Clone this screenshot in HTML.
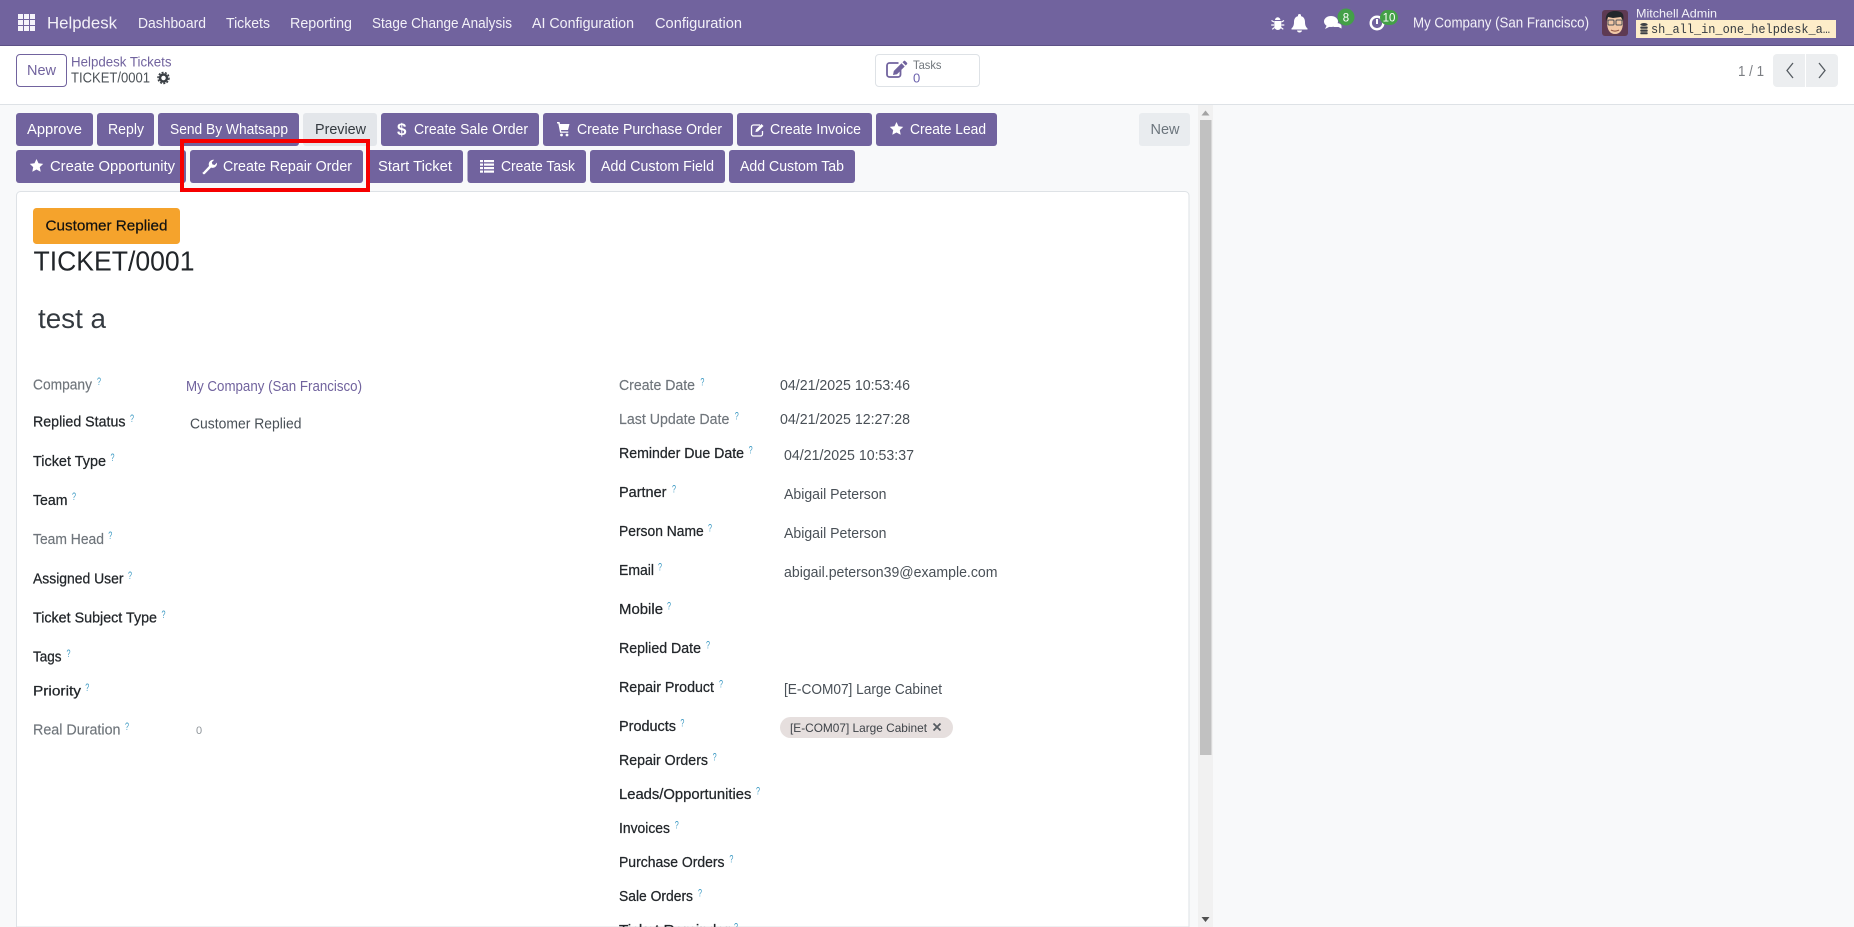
<!DOCTYPE html>
<html lang="en"><head><meta charset="utf-8"><title>Helpdesk</title>
<style>
html,body{margin:0;padding:0;width:1854px;height:927px;overflow:hidden;background:#f8f9fa}
svg{display:block;position:absolute;left:0;top:0}
text{font-family:"Liberation Sans",sans-serif;font-size:14.5px;white-space:pre}
.n{fill:#f3f1f8}
.b{fill:#fff;font-size:14.5px}
.l{fill:#22262a;stroke:#22262a;stroke-width:.25px}
.g{fill:#6f757b;stroke:#6f757b;stroke-width:.15px}
.v{fill:#495057}
.q{fill:#3f9bc4;font-size:11px}
.m{fill:#71639e}
</style></head><body>
<svg width="1854" height="927" viewBox="0 0 1854 927" xmlns="http://www.w3.org/2000/svg">
<rect width="1854" height="927" fill="#f8f9fa"/>
<!-- navbar -->
<rect width="1854" height="46" fill="#71639e"/>
<rect y="45" width="1854" height="1" fill="#5d5186"/>
<g fill="#f5f3fa">
<rect x="18" y="14" width="5" height="5"/><rect x="24" y="14" width="5" height="5"/><rect x="30" y="14" width="5" height="5"/>
<rect x="18" y="20" width="5" height="5"/><rect x="24" y="20" width="5" height="5"/><rect x="30" y="20" width="5" height="5"/>
<rect x="18" y="26" width="5" height="5"/><rect x="24" y="26" width="5" height="5"/><rect x="30" y="26" width="5" height="5"/>
</g>
<text class="n" x="47" y="28.500" style="font-size:16.500px" textLength="70" lengthAdjust="spacingAndGlyphs">Helpdesk</text>
<text class="n" x="138" y="28" textLength="68" lengthAdjust="spacingAndGlyphs">Dashboard</text>
<text class="n" x="226" y="28" textLength="44" lengthAdjust="spacingAndGlyphs">Tickets</text>
<text class="n" x="290" y="28" textLength="62" lengthAdjust="spacingAndGlyphs">Reporting</text>
<text class="n" x="372" y="28" textLength="140" lengthAdjust="spacingAndGlyphs">Stage Change Analysis</text>
<text class="n" x="532" y="28" textLength="102" lengthAdjust="spacingAndGlyphs">AI Configuration</text>
<text class="n" x="655" y="28" textLength="87" lengthAdjust="spacingAndGlyphs">Configuration</text>
<!-- systray -->
<g fill="#fff">
<path d="M1275 20a2.700 2.700 0 0 1 5.400 0zM1274.300 21h7v5.500a3.500 3.500 0 0 1-7 0z"/>
<path d="M1274 22l-2.500-1.500M1281.500 22l2.500-1.500M1274 25h-2.800M1281.500 25h2.800M1274.500 27.500l-2.300 1.800M1281 27.500l2.300 1.800" stroke="#fff" stroke-width="1.200" fill="none"/>
<path d="M1299.500 14a1.500 1.500 0 0 1 1.500 1.500v.6c2.800.7 4 3 4 5.900 0 3.500 1 5 2.500 6.500v1h-16v-1c1.500-1.500 2.500-3 2.500-6.500 0-2.900 1.200-5.200 4-5.900v-.6a1.500 1.500 0 0 1 1.500-1.500zM1297 30.500h5a2.500 2 0 0 1-5 0z"/>
<ellipse cx="1331" cy="21.500" rx="7" ry="5.500"/><path d="M1327 25l-2 4 5-2.500z"/>
<path d="M1336 23c3.500 0 5.500 1.500 5.500 3v2.500l-3-1.500h-5z"/>
</g>
<circle cx="1346" cy="17" r="8.500" fill="#43a047"/>
<text x="1346" y="21.500" text-anchor="middle" fill="#fff" style="font-size:11.500px">8</text>
<circle cx="1377" cy="23" r="6.300" fill="none" stroke="#fff" stroke-width="2.400"/>
<rect x="1376" y="19" width="2" height="5" fill="#fff"/>
<rect x="1380" y="10" width="18" height="15" rx="7.500" fill="#43a047"/>
<text x="1389" y="21.500" text-anchor="middle" fill="#fff" style="font-size:11.500px">10</text>
<text class="n" x="1413" y="27.500" textLength="176" lengthAdjust="spacingAndGlyphs">My Company (San Francisco)</text>
<!-- avatar -->
<rect x="1602" y="10" width="26" height="26" rx="3" fill="#5e3a52"/>
<path d="M1607 22c0 8 3 12 8 12s8-4 8-12l-1-5h-14z" fill="#f1c8a6"/>
<path d="M1606 21c-1-7 3-10 9-10s10 2 8 10l-2-4-8 1-5-1z" fill="#23272b"/>
<g fill="none" stroke="#4c5157" stroke-width="1"><rect x="1608" y="20" width="6" height="5" rx="1"/><rect x="1616" y="20" width="6" height="5" rx="1"/></g>
<path d="M1611 30c2 1.500 6 1.500 8 0" stroke="#8a4a3a" stroke-width="1" fill="none"/>
<text class="n" x="1636" y="17.500" style="font-size:12px" textLength="81" lengthAdjust="spacingAndGlyphs">Mitchell Admin</text>
<rect x="1636" y="20" width="200" height="18" fill="#fdedc9"/>
<g fill="#3c4045"><ellipse cx="1644" cy="24.500" rx="3.700" ry="1.500"/><rect x="1640.300" y="26.500" width="7.400" height="2.200" rx=".8"/><rect x="1640.300" y="29.500" width="7.400" height="2.200" rx=".8"/><rect x="1640.300" y="32.300" width="7.400" height="2" rx=".8"/></g>
<text x="1651" y="33" fill="#343a40" style="font-family:'Liberation Mono',monospace;font-size:13px" textLength="179" lengthAdjust="spacingAndGlyphs">sh_all_in_one_helpdesk_a…</text>
<!-- control panel -->
<rect y="46" width="1854" height="58" fill="#fff"/>
<rect y="104" width="1854" height="1" fill="#dee2e6"/>
<rect x="16.500" y="54.500" width="50" height="32" rx="3.500" fill="#fff" stroke="#71639e"/>
<text class="m" x="27" y="75" textLength="29" lengthAdjust="spacingAndGlyphs">New</text>
<text class="m" x="71" y="66.500" style="font-size:13.500px" textLength="100.500" lengthAdjust="spacingAndGlyphs">Helpdesk Tickets</text>
<text fill="#4d5358" x="71" y="82.500" textLength="79" lengthAdjust="spacingAndGlyphs">TICKET/0001</text>
<circle cx="163.500" cy="78" r="3.500" fill="none" stroke="#3a3f44" stroke-width="2.500"/>
<circle cx="163.500" cy="78" r="5.500" fill="none" stroke="#3a3f44" stroke-width="1.500" stroke-dasharray="2 1.400"/>
<rect x="875.500" y="54.500" width="104" height="32" rx="3.500" fill="#fff" stroke="#dee2e6"/>
<path d="M900.500 70v4.500a2.500 2.500 0 0 1-2.500 2.500h-8.500a2.500 2.500 0 0 1-2.500-2.500v-9a2.500 2.500 0 0 1 2.500-2.500h9" fill="none" stroke="#71639e" stroke-width="1.800"/>
<path d="M893 75l.8-4 7.700-7.700 3.200 3.200-7.700 7.700zM902.500 62.300l3.200 3.200 1.300-1.300a1 1 0 0 0 0-1.400l-1.800-1.800a1 1 0 0 0-1.400 0z" fill="#71639e"/>
<text fill="#6f757b" x="913" y="69" style="font-size:12px" textLength="28.500" lengthAdjust="spacingAndGlyphs">Tasks</text>
<text fill="#6a60ac" x="913" y="82.500" style="font-size:13px">0</text>
<text fill="#7b7e83" x="1738" y="76" textLength="26" lengthAdjust="spacingAndGlyphs">1 / 1</text>
<path d="M1777 54h28v33h-28a4 4 0 0 1-4-4v-25a4 4 0 0 1 4-4z" fill="#eceef0"/>
<path d="M1806 54h28a4 4 0 0 1 4 4v25a4 4 0 0 1-4 4h-28z" fill="#eceef0"/>
<path d="M1793 63l-6 7.500 6 7.500M1819 63l6 7.500-6 7.500" fill="none" stroke="#555b61" stroke-width="1.300"/>
<!-- action buttons -->
<g fill="#71639e">
<rect x="16" y="113" width="77" height="33" rx="3"/><rect x="97" y="113" width="57" height="33" rx="3"/>
<rect x="158" y="113" width="141" height="33" rx="3"/><rect x="381" y="113" width="158" height="33" rx="3"/>
<rect x="543" y="113" width="190" height="33" rx="3"/><rect x="737" y="113" width="135" height="33" rx="3"/>
<rect x="876" y="113" width="121" height="33" rx="3"/>
<rect x="16" y="150" width="170" height="33" rx="3"/><rect x="190" y="150" width="173" height="33" rx="3"/>
<rect x="367" y="150" width="96" height="33" rx="3"/><rect x="467.500" y="150" width="118.500" height="33" rx="3"/>
<rect x="590" y="150" width="135" height="33" rx="3"/><rect x="729" y="150" width="126" height="33" rx="3"/>
</g>
<rect x="303" y="113" width="74" height="33" rx="3" fill="#e3e6ea"/>
<rect x="1139" y="113" width="51" height="33" rx="3" fill="#e9ecef"/>
<text class="b" x="27" y="134" textLength="55" lengthAdjust="spacingAndGlyphs">Approve</text>
<text class="b" x="108" y="134" textLength="36" lengthAdjust="spacingAndGlyphs">Reply</text>
<text class="b" x="170" y="134" textLength="118" lengthAdjust="spacingAndGlyphs">Send By Whatsapp</text>
<text fill="#343a40" x="315" y="134" textLength="51" lengthAdjust="spacingAndGlyphs">Preview</text>
<text fill="#fff" x="397" y="135" style="font-size:17px;font-weight:bold">$</text>
<text class="b" x="414" y="134" textLength="114" lengthAdjust="spacingAndGlyphs">Create Sale Order</text>
<path d="M557 122h2.500l.5 2h9.500l-1.500 6h-7l.3 1.500h7v1.300h-8.200l-1.800-9.300h-1.300z" fill="#fff"/><circle cx="561.500" cy="135" r="1.400" fill="#fff"/><circle cx="567" cy="135" r="1.400" fill="#fff"/>
<text class="b" x="577" y="134" textLength="145" lengthAdjust="spacingAndGlyphs">Create Purchase Order</text>
<path d="M760 125h-6.500a2 2 0 0 0-2 2v7a2 2 0 0 0 2 2h7a2 2 0 0 0 2-2v-3" fill="none" stroke="#fff" stroke-width="1.300"/><path d="M756 129.500l-.6 2.600 2.600-.6 5.500-5.500-2-2z" fill="#fff"/>
<text class="b" x="770" y="134" textLength="91" lengthAdjust="spacingAndGlyphs">Create Invoice</text>
<path d="M896.500 122l2 4.300 4.700.6-3.400 3.200.9 4.700-4.200-2.300-4.200 2.300.9-4.700-3.400-3.200 4.700-.6z" fill="#fff"/>
<text class="b" x="910" y="134" textLength="76" lengthAdjust="spacingAndGlyphs">Create Lead</text>
<text fill="#6c757d" x="1150.500" y="134" textLength="29" lengthAdjust="spacingAndGlyphs">New</text>
<path d="M36.500 159l2 4.300 4.700.6-3.400 3.200.9 4.700-4.200-2.300-4.200 2.300.9-4.700-3.400-3.200 4.700-.6z" fill="#fff"/>
<text class="b" x="50" y="171" textLength="125" lengthAdjust="spacingAndGlyphs">Create Opportunity</text>
<path transform="translate(-1,0)" d="M204 172.500l6-6.500c-1-3 .8-6 4-6.300l1.200.1-2.400 2.400.6 2.200 2.200.6 2.400-2.400c.4 3.500-2.600 6-6 5l-6 6.200a1.300 1.300 0 0 1-2-1.800z" fill="#fff"/>
<text class="b" x="223" y="171" textLength="129" lengthAdjust="spacingAndGlyphs">Create Repair Order</text>
<text class="b" x="378" y="171" textLength="74" lengthAdjust="spacingAndGlyphs">Start Ticket</text>
<g fill="#fff"><rect x="480" y="160" width="14" height="2.200"/><rect x="480" y="163.500" width="14" height="2.200"/><rect x="480" y="167" width="14" height="2.200"/><rect x="480" y="170.500" width="14" height="2.200"/></g>
<rect x="483" y="159.500" width="1" height="13.500" fill="#71639e"/>
<text class="b" x="501" y="171" textLength="74" lengthAdjust="spacingAndGlyphs">Create Task</text>
<text class="b" x="601" y="171" textLength="113" lengthAdjust="spacingAndGlyphs">Add Custom Field</text>
<text class="b" x="740" y="171" textLength="104" lengthAdjust="spacingAndGlyphs">Add Custom Tab</text>
<!-- card -->
<path d="M16.500 927V195.500a4 4 0 0 1 4-4H1185a4 4 0 0 1 4 4V927z" fill="#fff" stroke="#dee2e6"/>
<!-- red box -->
<rect x="182" y="141" width="186" height="49" fill="none" stroke="#f60000" stroke-width="4"/>
<rect x="33" y="208" width="147" height="36" rx="3.500" fill="#f5a32c"/>
<text fill="#111" stroke="#111" stroke-width=".2" x="45.500" y="230.500" textLength="122" lengthAdjust="spacingAndGlyphs">Customer Replied</text>
<text fill="#212529" x="33.500" y="270.500" style="font-size:28px" textLength="161" lengthAdjust="spacingAndGlyphs">TICKET/0001</text>
<text fill="#343a40" x="38" y="328" style="font-size:28px" textLength="68" lengthAdjust="spacingAndGlyphs">test a</text>
<!-- left column -->
<text class="g" x="33" y="389.500" textLength="59" lengthAdjust="spacingAndGlyphs">Company</text><text class="q" x="97" y="385" textLength="4" lengthAdjust="spacingAndGlyphs">?</text>
<text class="m" x="186" y="391" textLength="176" lengthAdjust="spacingAndGlyphs">My Company (San Francisco)</text>
<text class="l" x="33" y="426.500" textLength="92.500" lengthAdjust="spacingAndGlyphs">Replied Status</text><text class="q" x="130" y="422" textLength="4" lengthAdjust="spacingAndGlyphs">?</text>
<text class="v" x="190" y="428.500" textLength="111.500" lengthAdjust="spacingAndGlyphs">Customer Replied</text>
<text class="l" x="33" y="466" textLength="73" lengthAdjust="spacingAndGlyphs">Ticket Type</text><text class="q" x="110.500" y="461" textLength="4" lengthAdjust="spacingAndGlyphs">?</text>
<text class="l" x="33" y="505" textLength="34.500" lengthAdjust="spacingAndGlyphs">Team</text><text class="q" x="72" y="500" textLength="4" lengthAdjust="spacingAndGlyphs">?</text>
<text class="g" x="33" y="544" textLength="71" lengthAdjust="spacingAndGlyphs">Team Head</text><text class="q" x="108.300" y="539" textLength="4" lengthAdjust="spacingAndGlyphs">?</text>
<text class="l" x="33" y="583.500" textLength="90.500" lengthAdjust="spacingAndGlyphs">Assigned User</text><text class="q" x="128" y="579" textLength="4" lengthAdjust="spacingAndGlyphs">?</text>
<text class="l" x="33" y="622.500" textLength="124" lengthAdjust="spacingAndGlyphs">Ticket Subject Type</text><text class="q" x="161.500" y="618" textLength="4" lengthAdjust="spacingAndGlyphs">?</text>
<text class="l" x="33" y="661.500" textLength="28.500" lengthAdjust="spacingAndGlyphs">Tags</text><text class="q" x="66.500" y="657" textLength="4" lengthAdjust="spacingAndGlyphs">?</text>
<text class="l" x="33" y="695.500" style="font-size:14px" textLength="48" lengthAdjust="spacingAndGlyphs">Priority</text><text class="q" x="85.300" y="691" textLength="4" lengthAdjust="spacingAndGlyphs">?</text>
<text class="g" x="33" y="734.500" textLength="87.500" lengthAdjust="spacingAndGlyphs">Real Duration</text><text class="q" x="125" y="730" textLength="4" lengthAdjust="spacingAndGlyphs">?</text>
<text fill="#8f959a" x="196" y="734" style="font-size:11px">0</text>
<!-- right column -->
<text class="g" x="619" y="390" textLength="76" lengthAdjust="spacingAndGlyphs">Create Date</text><text class="q" x="700.400" y="385.500" textLength="4" lengthAdjust="spacingAndGlyphs">?</text>
<text class="v" x="780" y="390" textLength="130" lengthAdjust="spacingAndGlyphs">04/21/2025 10:53:46</text>
<text class="g" x="619" y="424" textLength="110.400" lengthAdjust="spacingAndGlyphs">Last Update Date</text><text class="q" x="734.700" y="419.500" textLength="4" lengthAdjust="spacingAndGlyphs">?</text>
<text class="v" x="780" y="424" textLength="130" lengthAdjust="spacingAndGlyphs">04/21/2025 12:27:28</text>
<text class="l" x="619" y="458" textLength="125" lengthAdjust="spacingAndGlyphs">Reminder Due Date</text><text class="q" x="748.600" y="453.500" textLength="4" lengthAdjust="spacingAndGlyphs">?</text>
<text class="v" x="784" y="460" textLength="130" lengthAdjust="spacingAndGlyphs">04/21/2025 10:53:37</text>
<text class="l" x="619" y="497" textLength="47.500" lengthAdjust="spacingAndGlyphs">Partner</text><text class="q" x="672" y="492.500" textLength="4" lengthAdjust="spacingAndGlyphs">?</text>
<text class="v" x="784" y="499" textLength="102.500" lengthAdjust="spacingAndGlyphs">Abigail Peterson</text>
<text class="l" x="619" y="536" textLength="84.700" lengthAdjust="spacingAndGlyphs">Person Name</text><text class="q" x="708" y="531.500" textLength="4" lengthAdjust="spacingAndGlyphs">?</text>
<text class="v" x="784" y="538" textLength="102.500" lengthAdjust="spacingAndGlyphs">Abigail Peterson</text>
<text class="l" x="619" y="575" textLength="35" lengthAdjust="spacingAndGlyphs">Email</text><text class="q" x="658" y="570.500" textLength="4" lengthAdjust="spacingAndGlyphs">?</text>
<text class="v" x="784" y="577" textLength="213.500" lengthAdjust="spacingAndGlyphs">abigail.peterson39@example.com</text>
<text class="l" x="619" y="614" textLength="44" lengthAdjust="spacingAndGlyphs">Mobile</text><text class="q" x="667" y="609.500" textLength="4" lengthAdjust="spacingAndGlyphs">?</text>
<text class="l" x="619" y="653" textLength="82" lengthAdjust="spacingAndGlyphs">Replied Date</text><text class="q" x="706" y="648.500" textLength="4" lengthAdjust="spacingAndGlyphs">?</text>
<text class="l" x="619" y="692" textLength="95" lengthAdjust="spacingAndGlyphs">Repair Product</text><text class="q" x="719" y="687.500" textLength="4" lengthAdjust="spacingAndGlyphs">?</text>
<text class="v" x="784" y="694" textLength="158" lengthAdjust="spacingAndGlyphs">[E-COM07] Large Cabinet</text>
<text class="l" x="619" y="731" textLength="57" lengthAdjust="spacingAndGlyphs">Products</text><text class="q" x="680.400" y="726.500" textLength="4" lengthAdjust="spacingAndGlyphs">?</text>
<rect x="780" y="717" width="173" height="21" rx="10.500" fill="#e6dfde"/>
<text fill="#3e4348" x="790" y="732" style="font-size:12px" textLength="137" lengthAdjust="spacingAndGlyphs">[E-COM07] Large Cabinet</text>
<path d="M933.500 723.500l7 7M940.500 723.500l-7 7" stroke="#555b61" stroke-width="1.800" fill="none"/>
<text class="l" x="619" y="765" textLength="89" lengthAdjust="spacingAndGlyphs">Repair Orders</text><text class="q" x="712.600" y="760.500" textLength="4" lengthAdjust="spacingAndGlyphs">?</text>
<text class="l" x="619" y="799" textLength="132.400" lengthAdjust="spacingAndGlyphs">Leads/Opportunities</text><text class="q" x="756" y="794.500" textLength="4" lengthAdjust="spacingAndGlyphs">?</text>
<text class="l" x="619" y="833" textLength="51" lengthAdjust="spacingAndGlyphs">Invoices</text><text class="q" x="674.700" y="828.500" textLength="4" lengthAdjust="spacingAndGlyphs">?</text>
<text class="l" x="619" y="867" textLength="105.500" lengthAdjust="spacingAndGlyphs">Purchase Orders</text><text class="q" x="729.400" y="862.500" textLength="4" lengthAdjust="spacingAndGlyphs">?</text>
<text class="l" x="619" y="901" textLength="74" lengthAdjust="spacingAndGlyphs">Sale Orders</text><text class="q" x="698" y="896.500" textLength="4" lengthAdjust="spacingAndGlyphs">?</text>
<text class="l" x="619" y="935" textLength="111" lengthAdjust="spacingAndGlyphs">Ticket Reminder</text><text class="q" x="734" y="930.500" textLength="4" lengthAdjust="spacingAndGlyphs">?</text>
<!-- scrollbar -->
<rect x="1198" y="105" width="15" height="822" fill="#f1f1f1"/>
<rect x="1200" y="120" width="11.500" height="635" fill="#c1c1c1"/>
<path d="M1205.500 110.500l-4 5h8z" fill="#a3a3a3"/>
<path d="M1205.500 922l-4-5h8z" fill="#505050"/>
</svg>
</body></html>
